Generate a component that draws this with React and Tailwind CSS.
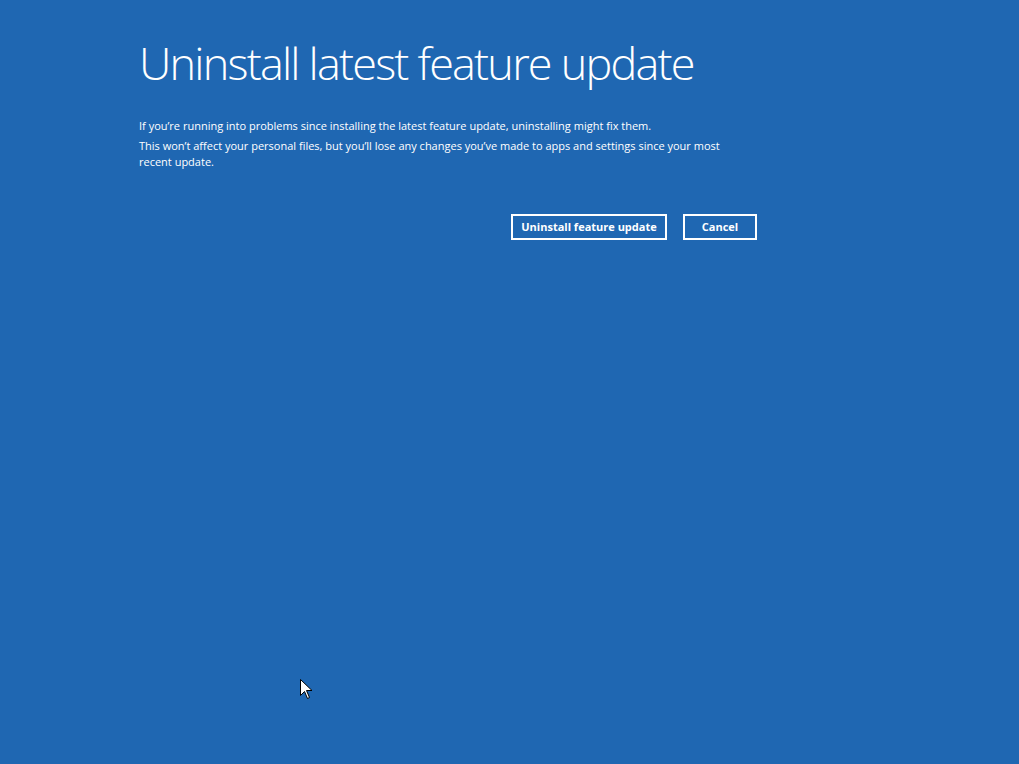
export default function App() {
  return (
    <div className="relative w-[1019px] h-[764px] bg-[#1f67b2] text-white overflow-hidden" style={{ fontFamily: '"Open Sans", "Noto Sans", sans-serif' }}>
      <div className="pl-[139px] pt-[35px] w-[760px]">
        <h1 className="text-[45px] font-light leading-[56px] tracking-[-1.8px]">Uninstall latest feature update</h1>
        <div className="mt-[27px] w-[600px] text-[11px] leading-[16px]">
          <p>If you’re running into problems since installing the latest feature update, uninstalling might fix them.</p>
          <p className="mt-[4px]">This won’t affect your personal files, but you’ll lose any changes you’ve made to apps and settings since your most recent update.</p>
        </div>
        <div className="mt-[44px] flex justify-end gap-[16px] w-[618px]">
          <button className="h-[26px] w-[156px] border-2 border-white text-[11px] font-bold">Uninstall feature update</button>
          <button className="h-[26px] w-[74px] border-2 border-white text-[11px] font-bold">Cancel</button>
        </div>
      </div>
      <svg className="absolute left-[300px] top-[679px]" width="14" height="22" viewBox="0 0 14 22">
        <path d="M0.5 0.5 L0.5 16.5 L4.5 12.5 L7.5 19.5 L9.5 18.5 L6.5 11.5 L12 11.5 Z" fill="white" stroke="black" strokeWidth="1" />
      </svg>
    </div>
  );
}
